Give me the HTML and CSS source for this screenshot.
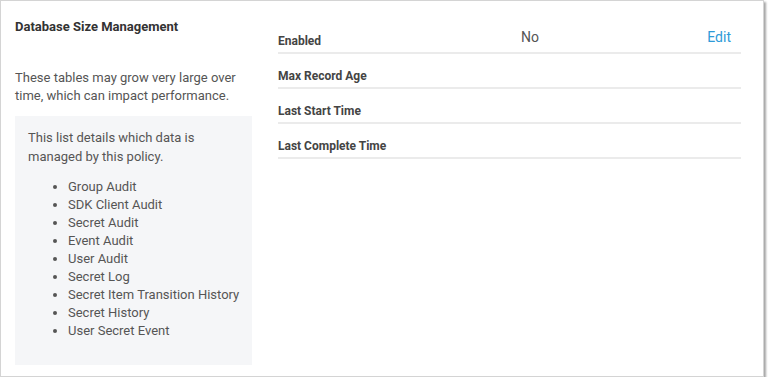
FILE: index.html
```html
<!DOCTYPE html>
<html lang="en">
<head>
    <meta charset="UTF-8">
    <title>Database Size Management</title>
    <link rel="stylesheet" href="styles.css">
</head>
<body>
    <div class="card">
        <div class="info">
            <h2>Database Size Management</h2>
            <p class="lead">These tables may grow very large over time, which can impact performance.</p>

            <div class="details">
                <p>This list details which data is managed by this policy.</p>
                <ul>
                    <li>Group Audit</li>
                    <li>SDK Client Audit</li>
                    <li>Secret Audit</li>
                    <li>Event Audit</li>
                    <li>User Audit</li>
                    <li>Secret Log</li>
                    <li>Secret Item Transition History</li>
                    <li>Secret History</li>
                    <li>User Secret Event</li>
                </ul>
            </div>
        </div>

        <div class="settings">
            <div class="row">
                <span class="label">Enabled</span>
                <span class="value">No</span>
                <a class="edit" href="#">Edit</a>
            </div>
            <div class="row">
                <span class="label">Max Record Age</span>
            </div>
            <div class="row">
                <span class="label">Last Start Time</span>
            </div>
            <div class="row">
                <span class="label">Last Complete Time</span>
            </div>
        </div>
    </div>
</body>
</html>
```

FILE: styles.css
```css
body {
    margin: 0;
    font-family: Roboto, 'Liberation Sans', sans-serif;
    background: #ffffff;
}

.card {
    display: flex;
    width: 764px;
    height: 377px;
    box-sizing: border-box;
    padding: 17px 22px 0 14px;
    border: 1px solid #d4d4d4;
    box-shadow: 2px 2px 2px rgba(0,0,0,0.35);
    background: #fff;
}

/* левая колонка */
.info {
    width: 237px;
    margin-right: 26px;
}

.info h2 {
    margin: 0;
    font-size: 13px;
    line-height: 18px;
    font-weight: 700;
    color: #333;
}

.lead {
    margin: 33px 0 11px;
    font-size: 13px;
    line-height: 18px;
    color: #555;
}

.details {
    background: #f5f6f8;
    height: 249px;
    box-sizing: border-box;
    padding: 12px 8px 0 13px;
    color: #555;
    font-size: 13px;
}

.details p {
    margin: 0 0 12px;
    line-height: 19px;
}

.details ul {
    margin: 0;
    padding-left: 40px;
    line-height: 18px;
}

/* правая колонка */
.settings {
    flex: 1;
    padding-top: 1px;
}

.row {
    display: grid;
    grid-template-columns: 243px 1fr auto;
    align-items: end;
    height: 35px;
    box-sizing: border-box;
    padding: 0 10px 3px 0;
    border-bottom: 2px solid #ebebeb;
}

.label {
    font-size: 12px;
    line-height: 16px;
    font-weight: 700;
    color: #444;
}

.value {
    font-size: 14px;
    line-height: 16px;
    color: #555;
    padding-bottom: 4px;
}

.edit {
    font-size: 14px;
    line-height: 16px;
    color: #2e9ad8;
    text-decoration: none;
    padding-bottom: 4px;
}
```
